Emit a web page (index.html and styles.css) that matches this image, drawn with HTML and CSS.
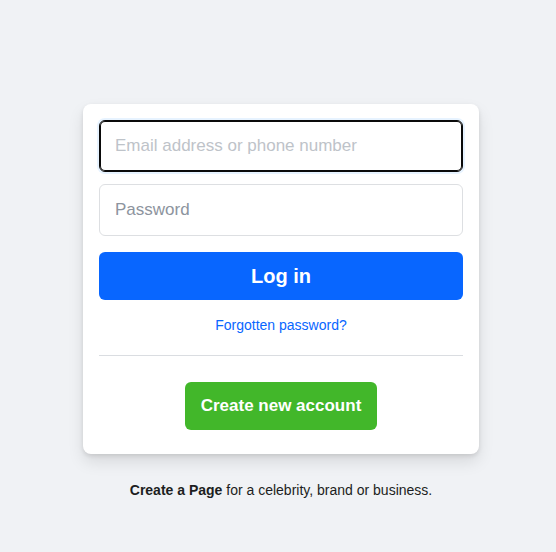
FILE: index.html
```html
<!DOCTYPE html>
<html lang="en">
<head>
<meta charset="utf-8">
<title>Log in</title>
<link rel="stylesheet" href="styles.css">
</head>
<body>
<main class="page">
  <div class="card">
    <form class="form">
      <input class="field field-focused" type="text" placeholder="Email address or phone number">
      <input class="field" type="password" placeholder="Password">
      <button class="login" type="button">Log in</button>
      <a class="forgot" href="#">Forgotten password?</a>
      <div class="divider"></div>
      <div class="create-row">
        <button class="create" type="button">Create new account</button>
      </div>
    </form>
  </div>
  <p class="page-note"><b>Create a Page</b> for a celebrity, brand or business.</p>
</main>
</body>
</html>
```
FILE: styles.css
```css
html, body {
  margin: 0;
  padding: 0;
  background: #f0f2f5;
  font-family: "Liberation Sans", Arial, Helvetica, sans-serif;
  color: #1c1e21;
}
.page {
  padding: 104px 0 0 6px;
  display: flex;
  flex-direction: column;
  align-items: center;
}
.card {
  width: 396px;
  box-sizing: border-box;
  background: #fff;
  border-radius: 8px;
  box-shadow: 0 2px 4px rgba(0,0,0,.1), 0 8px 16px rgba(0,0,0,.1);
  padding: 16px 16px 24px;
}
.form {
  display: flex;
  flex-direction: column;
}
.field {
  height: 52px;
  box-sizing: border-box;
  border: 1px solid #dddfe2;
  border-radius: 6px;
  padding: 0 15px;
  font-family: inherit;
  font-size: 17px;
  color: #1d2129;
  outline: none;
  margin-bottom: 12px;
}
.field::placeholder {
  color: #8d949e;
}
.field-focused {
  border-color: #0a0a0a;
  box-shadow: inset 0 0 0 1px #0a0a0a, 0 0 0 2px #e7f3ff;
}
.field-focused::placeholder {
  color: #bec3c9;
}
.login {
  margin-top: 4px;
  height: 48px;
  border: none;
  border-radius: 6px;
  background: #0866ff;
  color: #fff;
  font-family: inherit;
  font-size: 20px;
  font-weight: bold;
}
.forgot {
  margin-top: 16px;
  align-self: center;
  color: #0866ff;
  font-size: 14px;
  line-height: 19px;
  text-decoration: none;
}
.divider {
  margin: 20px 0 26px;
  height: 1px;
  background: #dadde1;
}
.create-row {
  display: flex;
  justify-content: center;
}
.create {
  height: 48px;
  padding: 0 16px;
  border: none;
  border-radius: 6px;
  background: #42b72a;
  color: #fff;
  font-family: inherit;
  font-size: 17px;
  font-weight: bold;
}
.page-note {
  margin: 28px 0 0;
  font-size: 14px;
  line-height: 17px;
  color: #1c1e21;
}
.page-note b {
  font-weight: bold;
}
```
